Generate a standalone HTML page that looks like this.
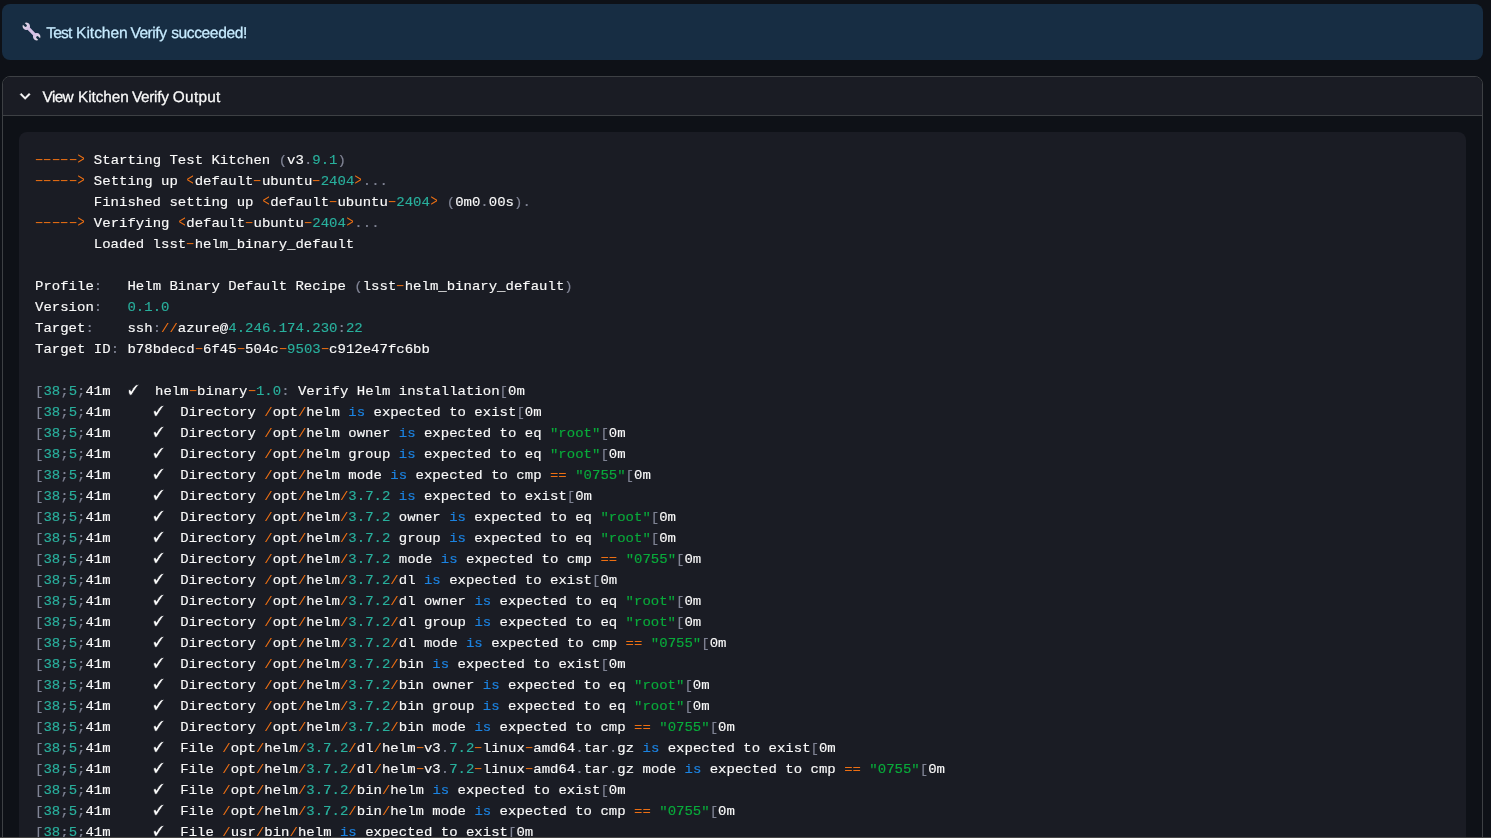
<!DOCTYPE html>
<html lang="en"><head><meta charset="utf-8"><title>Test Kitchen Verify</title>
<style>
html,body{margin:0;padding:0}
body{width:1491px;height:838px;overflow:hidden;background:#0e1117;position:relative;font-family:"Liberation Sans",sans-serif;color:#fafafa}
.alert{position:absolute;left:2px;top:4px;width:1481px;height:56px;border-radius:8px;background:#172d43;color:#c7ebff}
.alert,.exp{will-change:transform}
.alert .txt{position:absolute;left:0;top:18px;font-size:15.6px;line-height:24px;white-space:nowrap}
.alert svg{position:absolute;left:20.15px;top:18.2px}
.txt span{position:absolute;top:0}
.txt{text-rendering:geometricPrecision;-webkit-text-stroke:0.25px currentColor}
.exp{position:absolute;left:2px;top:76px;width:1479px;height:800px;border:1px solid #3d4044;border-radius:8px;overflow:hidden}
.exp .hd{position:absolute;left:0;top:0;right:0;height:38px;background:#1a1c24;border-bottom:1px solid #3d4044}
.exp .hd svg{position:absolute;left:11.75px;top:8.6px}
.exp .hd .txt{position:absolute;left:0;top:9px;font-size:15.4px;line-height:24px;white-space:nowrap}
pre{position:absolute;left:19px;top:132px;width:1415px;height:760px;margin:0;padding:18px 16px 16px;border-radius:8px;background:#1a1c24;
 font-family:"Liberation Mono",monospace;font-size:14px;line-height:21px;color:#fafafa;white-space:pre;overflow:hidden;will-change:transform}
pre code{display:block;font:inherit;-webkit-text-stroke:0.15px currentColor;line-height:22px;transform:scaleY(0.9545455);transform-origin:0 0}
pre .s{color:#09ab3b}pre .k{color:#1c83e1}pre .n{color:#29b09d}pre .o{color:#ed6f13;-webkit-text-stroke:0}pre .p{color:#808495}
pre .d{display:inline-block;transform:scaleX(1.7);-webkit-text-stroke:0;position:relative;top:-1.05px}
pre .a{display:inline-block;transform:scale(0.86,1.24);position:relative;top:-0.6px}
pre .c{display:inline-block;width:10.8px;height:14px;font-family:"DejaVu Sans",sans-serif;font-size:16.5px;line-height:14px;vertical-align:baseline;transform:scaleY(1.257);transform-origin:50% 100%;position:relative;left:-1px;top:2.4px;-webkit-text-stroke:0.7px #1a1c24;overflow:visible}
.btm{position:absolute;left:0;top:837px;width:1491px;height:1px;background:#474747}
</style></head><body>
<div class="alert">
<svg width="19" height="19" viewBox="-9.5 -9.5 19 19"><defs><linearGradient id="wg" x1="-11.3" y1="0" x2="11.3" y2="0" gradientUnits="userSpaceOnUse"><stop offset="0" stop-color="#e3dfe8"/><stop offset="0.3" stop-color="#d6c1e5"/><stop offset="0.7" stop-color="#d6c1e5"/><stop offset="1" stop-color="#e3dfe8"/></linearGradient></defs>
<g transform="rotate(45)" fill="url(#wg)"><rect x="-5" y="-1.6" width="10" height="3.2"/>
<path d="M-10.82-1.25A3.7 3.7 0 1 1-10.82 1.25L-7.7 1.25L-7 0L-7.7-1.25Z"/>
<path d="M10.82-1.25A3.7 3.7 0 1 0 10.82 1.25L7.7 1.25L7 0L7.7-1.25Z"/></g></svg>
<div class="txt"><span style="left:44.24px;letter-spacing:-0.826px">Test</span> <span style="left:74.10px;letter-spacing:-0.055px">Kitchen</span> <span style="left:128.38px;letter-spacing:-0.482px">Verify</span> <span style="left:169.16px;letter-spacing:-0.406px">succeeded!</span></div></div>
<div class="exp"><div class="hd">
<svg width="20.3" height="20.3" viewBox="0 0 24 24"><path fill="#fafafa" stroke="#fafafa" stroke-width="0.45" stroke-linejoin="miter" d="M16.59 8.59 12 13.17 7.41 8.59 6 10l6 6 6-6z"/></svg>
<div class="txt"><span style="left:39.58px;letter-spacing:-0.653px">View</span> <span style="left:74.94px;letter-spacing:-0.061px">Kitchen</span> <span style="left:128.91px;letter-spacing:-0.314px">Verify</span> <span style="left:169.87px;letter-spacing:0.267px">Output</span></div></div></div>
<pre><code><span class="o d">-</span><span class="o d">-</span><span class="o d">-</span><span class="o d">-</span><span class="o d">-</span><span class="o a">&gt;</span> Starting Test Kitchen <span class="p">(</span>v3<span class="p">.</span><span class="n">9.1</span><span class="p">)</span>
<span class="o d">-</span><span class="o d">-</span><span class="o d">-</span><span class="o d">-</span><span class="o d">-</span><span class="o a">&gt;</span> Setting up <span class="o a">&lt;</span>default<span class="o d">-</span>ubuntu<span class="o d">-</span><span class="n">2404</span><span class="o a">&gt;</span><span class="p">.</span><span class="p">.</span><span class="p">.</span>
       Finished setting up <span class="o a">&lt;</span>default<span class="o d">-</span>ubuntu<span class="o d">-</span><span class="n">2404</span><span class="o a">&gt;</span> <span class="p">(</span>0m0<span class="p">.</span>00s<span class="p">)</span><span class="p">.</span>
<span class="o d">-</span><span class="o d">-</span><span class="o d">-</span><span class="o d">-</span><span class="o d">-</span><span class="o a">&gt;</span> Verifying <span class="o a">&lt;</span>default<span class="o d">-</span>ubuntu<span class="o d">-</span><span class="n">2404</span><span class="o a">&gt;</span><span class="p">.</span><span class="p">.</span><span class="p">.</span>
       Loaded lsst<span class="o d">-</span>helm_binary_default

Profile<span class="p">:</span>   Helm Binary Default Recipe <span class="p">(</span>lsst<span class="o d">-</span>helm_binary_default<span class="p">)</span>
Version<span class="p">:</span>   <span class="n">0.1.0</span>
Target<span class="p">:</span>    ssh<span class="p">:</span><span class="o">//</span>azure@<span class="n">4.246.174.230</span><span class="p">:</span><span class="n">22</span>
Target ID<span class="p">:</span> b78bdecd<span class="o d">-</span>6f45<span class="o d">-</span>504c<span class="o d">-</span><span class="n">9503</span><span class="o d">-</span>c912e47fc6bb

<span class="p">[</span><span class="n">38</span><span class="p">;</span><span class="n">5</span><span class="p">;</span>41m  <span class="c">✔</span>  helm<span class="o d">-</span>binary<span class="o d">-</span><span class="n">1.0</span><span class="p">:</span> Verify Helm installation<span class="p">[</span>0m
<span class="p">[</span><span class="n">38</span><span class="p">;</span><span class="n">5</span><span class="p">;</span>41m     <span class="c">✔</span>  Directory <span class="o">/</span>opt<span class="o">/</span>helm <span class="k">is</span> expected to exist<span class="p">[</span>0m
<span class="p">[</span><span class="n">38</span><span class="p">;</span><span class="n">5</span><span class="p">;</span>41m     <span class="c">✔</span>  Directory <span class="o">/</span>opt<span class="o">/</span>helm owner <span class="k">is</span> expected to eq <span class="s">&quot;root&quot;</span><span class="p">[</span>0m
<span class="p">[</span><span class="n">38</span><span class="p">;</span><span class="n">5</span><span class="p">;</span>41m     <span class="c">✔</span>  Directory <span class="o">/</span>opt<span class="o">/</span>helm group <span class="k">is</span> expected to eq <span class="s">&quot;root&quot;</span><span class="p">[</span>0m
<span class="p">[</span><span class="n">38</span><span class="p">;</span><span class="n">5</span><span class="p">;</span>41m     <span class="c">✔</span>  Directory <span class="o">/</span>opt<span class="o">/</span>helm mode <span class="k">is</span> expected to cmp <span class="o">==</span> <span class="s">&quot;0755&quot;</span><span class="p">[</span>0m
<span class="p">[</span><span class="n">38</span><span class="p">;</span><span class="n">5</span><span class="p">;</span>41m     <span class="c">✔</span>  Directory <span class="o">/</span>opt<span class="o">/</span>helm<span class="o">/</span><span class="n">3.7.2</span> <span class="k">is</span> expected to exist<span class="p">[</span>0m
<span class="p">[</span><span class="n">38</span><span class="p">;</span><span class="n">5</span><span class="p">;</span>41m     <span class="c">✔</span>  Directory <span class="o">/</span>opt<span class="o">/</span>helm<span class="o">/</span><span class="n">3.7.2</span> owner <span class="k">is</span> expected to eq <span class="s">&quot;root&quot;</span><span class="p">[</span>0m
<span class="p">[</span><span class="n">38</span><span class="p">;</span><span class="n">5</span><span class="p">;</span>41m     <span class="c">✔</span>  Directory <span class="o">/</span>opt<span class="o">/</span>helm<span class="o">/</span><span class="n">3.7.2</span> group <span class="k">is</span> expected to eq <span class="s">&quot;root&quot;</span><span class="p">[</span>0m
<span class="p">[</span><span class="n">38</span><span class="p">;</span><span class="n">5</span><span class="p">;</span>41m     <span class="c">✔</span>  Directory <span class="o">/</span>opt<span class="o">/</span>helm<span class="o">/</span><span class="n">3.7.2</span> mode <span class="k">is</span> expected to cmp <span class="o">==</span> <span class="s">&quot;0755&quot;</span><span class="p">[</span>0m
<span class="p">[</span><span class="n">38</span><span class="p">;</span><span class="n">5</span><span class="p">;</span>41m     <span class="c">✔</span>  Directory <span class="o">/</span>opt<span class="o">/</span>helm<span class="o">/</span><span class="n">3.7.2</span><span class="o">/</span>dl <span class="k">is</span> expected to exist<span class="p">[</span>0m
<span class="p">[</span><span class="n">38</span><span class="p">;</span><span class="n">5</span><span class="p">;</span>41m     <span class="c">✔</span>  Directory <span class="o">/</span>opt<span class="o">/</span>helm<span class="o">/</span><span class="n">3.7.2</span><span class="o">/</span>dl owner <span class="k">is</span> expected to eq <span class="s">&quot;root&quot;</span><span class="p">[</span>0m
<span class="p">[</span><span class="n">38</span><span class="p">;</span><span class="n">5</span><span class="p">;</span>41m     <span class="c">✔</span>  Directory <span class="o">/</span>opt<span class="o">/</span>helm<span class="o">/</span><span class="n">3.7.2</span><span class="o">/</span>dl group <span class="k">is</span> expected to eq <span class="s">&quot;root&quot;</span><span class="p">[</span>0m
<span class="p">[</span><span class="n">38</span><span class="p">;</span><span class="n">5</span><span class="p">;</span>41m     <span class="c">✔</span>  Directory <span class="o">/</span>opt<span class="o">/</span>helm<span class="o">/</span><span class="n">3.7.2</span><span class="o">/</span>dl mode <span class="k">is</span> expected to cmp <span class="o">==</span> <span class="s">&quot;0755&quot;</span><span class="p">[</span>0m
<span class="p">[</span><span class="n">38</span><span class="p">;</span><span class="n">5</span><span class="p">;</span>41m     <span class="c">✔</span>  Directory <span class="o">/</span>opt<span class="o">/</span>helm<span class="o">/</span><span class="n">3.7.2</span><span class="o">/</span>bin <span class="k">is</span> expected to exist<span class="p">[</span>0m
<span class="p">[</span><span class="n">38</span><span class="p">;</span><span class="n">5</span><span class="p">;</span>41m     <span class="c">✔</span>  Directory <span class="o">/</span>opt<span class="o">/</span>helm<span class="o">/</span><span class="n">3.7.2</span><span class="o">/</span>bin owner <span class="k">is</span> expected to eq <span class="s">&quot;root&quot;</span><span class="p">[</span>0m
<span class="p">[</span><span class="n">38</span><span class="p">;</span><span class="n">5</span><span class="p">;</span>41m     <span class="c">✔</span>  Directory <span class="o">/</span>opt<span class="o">/</span>helm<span class="o">/</span><span class="n">3.7.2</span><span class="o">/</span>bin group <span class="k">is</span> expected to eq <span class="s">&quot;root&quot;</span><span class="p">[</span>0m
<span class="p">[</span><span class="n">38</span><span class="p">;</span><span class="n">5</span><span class="p">;</span>41m     <span class="c">✔</span>  Directory <span class="o">/</span>opt<span class="o">/</span>helm<span class="o">/</span><span class="n">3.7.2</span><span class="o">/</span>bin mode <span class="k">is</span> expected to cmp <span class="o">==</span> <span class="s">&quot;0755&quot;</span><span class="p">[</span>0m
<span class="p">[</span><span class="n">38</span><span class="p">;</span><span class="n">5</span><span class="p">;</span>41m     <span class="c">✔</span>  File <span class="o">/</span>opt<span class="o">/</span>helm<span class="o">/</span><span class="n">3.7.2</span><span class="o">/</span>dl<span class="o">/</span>helm<span class="o d">-</span>v3<span class="p">.</span><span class="n">7.2</span><span class="o d">-</span>linux<span class="o d">-</span>amd64<span class="p">.</span>tar<span class="p">.</span>gz <span class="k">is</span> expected to exist<span class="p">[</span>0m
<span class="p">[</span><span class="n">38</span><span class="p">;</span><span class="n">5</span><span class="p">;</span>41m     <span class="c">✔</span>  File <span class="o">/</span>opt<span class="o">/</span>helm<span class="o">/</span><span class="n">3.7.2</span><span class="o">/</span>dl<span class="o">/</span>helm<span class="o d">-</span>v3<span class="p">.</span><span class="n">7.2</span><span class="o d">-</span>linux<span class="o d">-</span>amd64<span class="p">.</span>tar<span class="p">.</span>gz mode <span class="k">is</span> expected to cmp <span class="o">==</span> <span class="s">&quot;0755&quot;</span><span class="p">[</span>0m
<span class="p">[</span><span class="n">38</span><span class="p">;</span><span class="n">5</span><span class="p">;</span>41m     <span class="c">✔</span>  File <span class="o">/</span>opt<span class="o">/</span>helm<span class="o">/</span><span class="n">3.7.2</span><span class="o">/</span>bin<span class="o">/</span>helm <span class="k">is</span> expected to exist<span class="p">[</span>0m
<span class="p">[</span><span class="n">38</span><span class="p">;</span><span class="n">5</span><span class="p">;</span>41m     <span class="c">✔</span>  File <span class="o">/</span>opt<span class="o">/</span>helm<span class="o">/</span><span class="n">3.7.2</span><span class="o">/</span>bin<span class="o">/</span>helm mode <span class="k">is</span> expected to cmp <span class="o">==</span> <span class="s">&quot;0755&quot;</span><span class="p">[</span>0m
<span class="p">[</span><span class="n">38</span><span class="p">;</span><span class="n">5</span><span class="p">;</span>41m     <span class="c">✔</span>  File <span class="o">/</span>usr<span class="o">/</span>bin<span class="o">/</span>helm <span class="k">is</span> expected to exist<span class="p">[</span>0m
<span class="p">[</span><span class="n">38</span><span class="p">;</span><span class="n">5</span><span class="p">;</span>41m     <span class="c">✔</span>  File <span class="o">/</span>usr<span class="o">/</span>bin<span class="o">/</span>helm mode <span class="k">is</span> expected to cmp <span class="o">==</span> <span class="s">&quot;0755&quot;</span><span class="p">[</span>0m</code></pre>
<div class="btm"></div>
</body></html>
